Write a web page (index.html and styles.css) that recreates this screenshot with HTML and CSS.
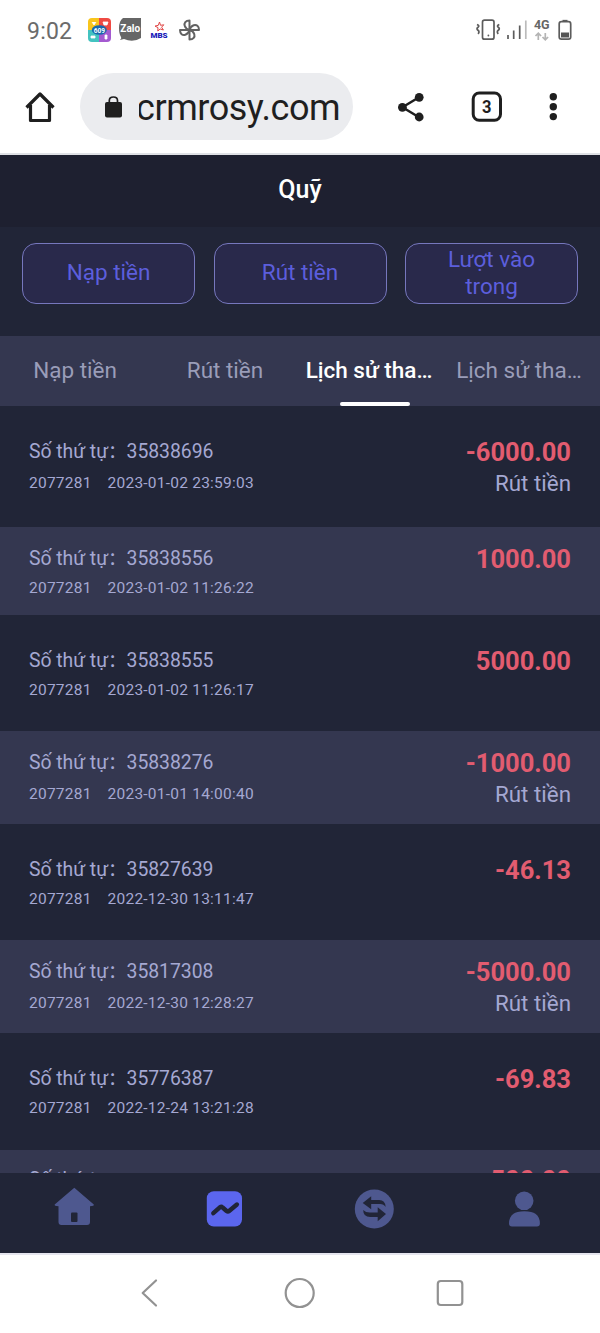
FILE: index.html
```html
<!DOCTYPE html>
<html lang="vi">
<head>
<meta charset="utf-8">
<title>Quỹ</title>
<link rel="stylesheet" href="styles.css">
</head>
<body>
<div class="screen">
  <header class="status">
    <span class="clock">9:02</span>
    <svg class="status-left" width="120" height="28" viewBox="84 16 120 28">
      <defs><clipPath id="app"><rect x="88" y="18" width="23" height="24" rx="4"/></clipPath></defs>
      <g clip-path="url(#app)">
        <path fill="#f8c51c" d="M88 18h12v12H88z"/><path fill="#ef4a43" d="M99 18h12v12H99z"/>
        <path fill="#43c3c0" d="M88 30h12v12H88z"/><path fill="#a45ad0" d="M99 30h12v12H99z"/>
      </g>
      <path d="m92 22 2 3 2-3M103 22h5l-1 3h-3zM91 36h4v2h-4zM105 35h2v4h-2z" fill="#fff" stroke="#fff" stroke-width=".8"/>
      <ellipse cx="99.3" cy="30" rx="7.500" ry="4.800" fill="#1769ad"/>
      <text x="99.3" y="32.500" class="badge-num">609</text>
      <path d="M123 18h18v20q-8 5-17 1l-4 1q2-2 1-3-2-3-2-9 0-7 4-10z" fill="#666"/>
      <text x="130.200" y="32.400" class="zalo">Zalo</text>
      <path d="m159.500 22 1 3.300 3.300-.5-2.200 2.400 1.800 2.800-3.200-1-2.400 2 .2-3.400-3-1.500 3.300-.8z" fill="none" stroke="#e04444" stroke-width="1"/>
      <text x="159" y="38" class="mbs">MBS</text>
      <g fill="none" stroke="#626262" stroke-width="2" stroke-linejoin="round">
        <path id="blade" d="M189.500 30v-9.500c-4 0-5.600 2.500-4.800 5.300.6 2 2.300 3.500 4.800 4.200z"/>
        <use href="#blade" transform="rotate(90 189.500 30)"/><use href="#blade" transform="rotate(180 189.500 30)"/><use href="#blade" transform="rotate(270 189.500 30)"/>
      </g>
    </svg>
    <svg class="status-right" width="104" height="28" viewBox="472 16 104 28">
      <g fill="none" stroke="#5c5c5c" stroke-width="1.700">
        <rect x="482.500" y="20.200" width="11.500" height="19" rx="2"/>
        <path d="M477 24.500q3 1.300 1 2.800t0 3 0 3.500M499.300 24.500q-3 1.300-1 2.800t0 3 0 3.500"/>
        <path d="M508 35v4M513.700 30.500V39M519.700 25.500V39"/>
        <path d="M525.800 20.500V39" stroke="#bbb"/>
        <rect x="559.200" y="21.700" width="11.500" height="17.500" rx="2.200"/>
        <path d="M562.500 20.700h5"/>
      </g>
      <circle cx="488.400" cy="35.500" r=".9" fill="#5c5c5c"/>
      <path d="M561 32.500h8v5h-8z" fill="#555"/>
      <text x="541.800" y="29.200" class="net">4G</text>
      <path d="M538.300 40v-6.500M535.500 36l2.800-2.900 2.800 2.900M545.300 33v6.500M542.500 37l2.800 2.900 2.800-2.900" fill="none" stroke="#b4b4b4" stroke-width="1.700"/>
    </svg>
  </header>

  <div class="browser">
    <svg class="home" width="32" height="32" viewBox="24 91 32 32"><path d="M26.500 107.500 40 94l13.500 13.500M30.500 105v15.500h19V105" fill="none" stroke="#1f1f1f" stroke-width="3.200" stroke-linejoin="round"/></svg>
    <div class="omnibox">
      <svg width="18" height="24" viewBox="104 94 18 24"><rect x="105" y="101" width="17" height="15.500" rx="2" fill="#1f1f1f"/><path d="M109.300 102v-2.500q0-3.500 4.100-3.500t4.100 3.500v2.500" fill="none" stroke="#1f1f1f" stroke-width="1.700"/></svg>
      <span class="url"><span>crmrosy.com</span></span>
    </div>
    <svg class="actions" width="170" height="36" viewBox="394 89 170 36">
      <path d="M419 97.300 402.500 107.300 419 117.300" fill="none" stroke="#1f1f1f" stroke-width="2.500"/>
      <g fill="#1f1f1f"><circle cx="419.200" cy="97.300" r="4.400"/><circle cx="402.400" cy="107.300" r="4.400"/><circle cx="419.200" cy="117" r="4.400"/>
      <circle cx="553.300" cy="96.800" r="3.700"/><circle cx="553.300" cy="106.700" r="3.700"/><circle cx="553.300" cy="116.600" r="3.700"/></g>
      <rect x="473.200" y="93" width="27.300" height="27.300" rx="6" fill="none" stroke="#1f1f1f" stroke-width="3"/>
      <text x="486.700" y="113.400" class="tabs-count" textLength="9.500" lengthAdjust="spacingAndGlyphs">3</text>
    </svg>
  </div>

  <h1 class="title">Quỹ</h1>
  <div class="buttons">
    <button>Nạp tiền</button><button>Rút tiền</button><button>Lượt vào<br>trong</button>
  </div>
  <nav class="tabs">
    <span>Nạp tiền</span><span>Rút tiền</span><span class="active"><em>Lịch sử tha…</em></span><span><em>Lịch sử tha…</em></span>
  </nav>

  <main class="list">
    <article class="row tall"><span class="id">Số thứ tự<i>：</i>35838696</span><b>-6000.00</b><span class="meta"><span>2077281</span><span>2023-01-02 23:59:03</span></span><span class="kind">Rút tiền</span></article>
    <article class="row"><span class="id">Số thứ tự<i>：</i>35838556</span><b>1000.00</b><span class="meta"><span>2077281</span><span>2023-01-02 11:26:22</span></span></article>
    <article class="row"><span class="id">Số thứ tự<i>：</i>35838555</span><b>5000.00</b><span class="meta"><span>2077281</span><span>2023-01-02 11:26:17</span></span></article>
    <article class="row tall"><span class="id">Số thứ tự<i>：</i>35838276</span><b>-1000.00</b><span class="meta"><span>2077281</span><span>2023-01-01 14:00:40</span></span><span class="kind">Rút tiền</span></article>
    <article class="row"><span class="id">Số thứ tự<i>：</i>35827639</span><b>-46.13</b><span class="meta"><span>2077281</span><span>2022-12-30 13:11:47</span></span></article>
    <article class="row tall"><span class="id">Số thứ tự<i>：</i>35817308</span><b>-5000.00</b><span class="meta"><span>2077281</span><span>2022-12-30 12:28:27</span></span><span class="kind">Rút tiền</span></article>
    <article class="row last-full"><span class="id">Số thứ tự<i>：</i>35776387</span><b>-69.83</b><span class="meta"><span>2077281</span><span>2022-12-24 13:21:28</span></span></article>
    <article class="row"><span class="id">Số thứ tự</span><b>500.00</b></article>
  </main>

  <nav class="bottom">
    <svg width="44" height="44" viewBox="52 1187 44 44"><path d="M74.300 1187.800 93.800 1204.500q.6 1.700-3.800 1.700V1222q0 3-3 3H61.500q-3 0-3-3v-15.800q-4.400 0-3.800-1.700z" fill="#4e588f"/><rect x="71" y="1212.500" width="6.500" height="9.500" rx="1" fill="#212537"/></svg>
    <svg width="44" height="44" viewBox="202 1187 44 44"><rect x="206.800" y="1191.200" width="35.200" height="35.300" rx="7" fill="#5b66ee"/><path d="m213.300 1213.200 6.800-6q1.300-.8 2.500.3l4 3.500q1.300 1 2.500 0l7.800-6.500" fill="none" stroke="#212537" stroke-width="4.400" stroke-linecap="round" stroke-linejoin="round"/></svg>
    <svg width="44" height="44" viewBox="352 1187 44 44"><circle cx="374.300" cy="1209" r="19.500" fill="#4e588f"/><path d="m362.700 1203 8.500-6.700v3.700h8q6 0 6.500 7-2-3-5.500-3h-9v5.300zM386 1214l-8.300 7.200v-4.200h-7.500q-7 0-7-7 2.500 2.500 6.500 2.500h8v-5.300z" fill="#212537"/></svg>
    <svg width="44" height="44" viewBox="502 1187 44 44"><g fill="#4e588f"><circle cx="524.200" cy="1200.800" r="9.300"/><path d="M509 1223.500q0-6.500 4.500-9.800 3-2.500 10.900-2.500t11 2.500q4.500 3.300 4.500 9.800 0 3-3 3H512q-3 0-3-3z"/></g></svg>
  </nav>
  <footer class="system">
    <svg width="40" height="40" viewBox="130 1273 40 40"><path d="M156 1280.500 142.700 1293 156 1305.500" /></svg>
    <svg width="40" height="40" viewBox="280 1273 40 40"><circle cx="299.700" cy="1293" r="14"/></svg>
    <svg width="40" height="40" viewBox="430 1273 40 40"><rect x="437.800" y="1281" width="24.500" height="24" rx="3"/></svg>
  </footer>
</div>
</body>
</html>
```
FILE: styles.css
```css
* { box-sizing: border-box; }
body { margin: 0; background: #fff; font-family: Roboto, "Noto Sans", sans-serif; }
svg { display: block; flex: none; }
.screen { width: 600px; height: 1333px; display: flex; flex-direction: column; overflow: hidden; background: #212537; }
.screen > * { flex: none; }
.status { height: 60px; display: flex; align-items: center; background: #fff; padding: 0 24px 0 27px; }
.clock { width: 57px; font-size: 23px; line-height: 28px; color: #6b6b6b; letter-spacing: .2px; padding-top: 3px; }
.status-right { margin-left: auto; }
.badge-num { font: bold 6.500px Roboto, sans-serif; fill: #fff; text-anchor: middle; }
.zalo { font: bold 10px Roboto, sans-serif; fill: #fff; text-anchor: middle; }
.mbs { font: 900 8px Roboto, sans-serif; fill: #2020b8; text-anchor: middle; }
.net { font: bold 12.500px Roboto, sans-serif; fill: #666; text-anchor: middle; }
.browser { height: 95px; display: flex; align-items: center; background: #fff; border-bottom: 2px solid #dfe1e5; padding: 0 36px 0 24px; }
.omnibox { width: 273px; height: 67px; margin-left: 24px; border-radius: 34px; background: #ebecef; display: flex; align-items: center; padding-left: 24px; }
.url { width: 202px; margin-left: 17px; overflow: hidden; display: flex; font-size: 36px; line-height: 50px; color: #1f1f1f; padding-top: 3px; letter-spacing: -.45px; }
.url span { margin-left: -3px; }
.actions { margin-left: auto; }
.tabs-count { font: bold 19px Roboto, sans-serif; fill: #1f1f1f; text-anchor: middle; }
.title { height: 72px; margin: 0; background: #1e2030; color: #fff; font-size: 25px; font-weight: 500; line-height: 69px; text-align: center; }
.buttons { height: 109px; padding: 16px 22px 0; display: grid; grid-template-columns: repeat(3, 173px); justify-content: space-between; }
.buttons button { height: 61px; border: 1px solid #7677bd; border-radius: 14px; background: #29294b; color: #5c5edc; font: 22.500px/27px Roboto, sans-serif; padding: 0 0 2px; }
.tabs { height: 70px; display: grid; grid-template-columns: repeat(4, 150px); background: #343750; color: #9a9db9; font-size: 22.500px; line-height: 69px; text-align: center; }
.tabs span { display: flex; flex-direction: column; align-items: center; white-space: nowrap; height: 70px; }
.tabs em { font-style: normal; margin-right: 12px; }
.tabs .active { color: #fff; font-weight: 500; }
.active::after { content: ""; width: 70px; height: 4px; margin-top: -3px; border-radius: 2px; background: #fff; flex: none; }
.list { height: 767px; overflow: hidden; color: #a5a8d2; }
.row { display: grid; grid-template: 35px 25px / 1fr auto; padding: 28px 29px; white-space: nowrap; align-items: center; }
.row.tall { grid-template-rows: 35px 29px; padding-bottom: 29px; }
.row:nth-child(even) { padding-top: 14px; padding-bottom: 14px; background: #343750; }
.row.tall:nth-child(even) { padding-bottom: 15px; }
.row.last-full { padding-bottom: 29px; }
.row:last-child { padding-top: 12px; }
.id { font-size: 19.400px; line-height: 34px; padding-top: 1px; letter-spacing: -.05px; }
.id i { font-family: "Noto Sans CJK SC", sans-serif; font-style: normal; line-height: 1; font-size: 18.500px; }
.row b { color: #e25c70; font-size: 25.500px; line-height: 34px; font-weight: 700; text-align: right; padding-top: 1px; }
.meta { display: flex; gap: 16px; font-size: 15.500px; line-height: 25px; letter-spacing: .23px; }
.kind { font-size: 22.400px; line-height: 29px; text-align: right; padding-bottom: 1px; }
.bottom { height: 80px; display: flex; justify-content: space-around; padding: 14px 0 0; background: #212537; }
.bottom svg { margin-right: 2px; }
.system { height: 80px; display: flex; justify-content: center; gap: 110px; padding-top: 20px; background: #fff; border-top: 2px solid #e5e5ee; }
.system svg { margin-top: -2px; fill: none; stroke: #929292; stroke-width: 2.200; stroke-linecap: round; stroke-linejoin: round; }
```
